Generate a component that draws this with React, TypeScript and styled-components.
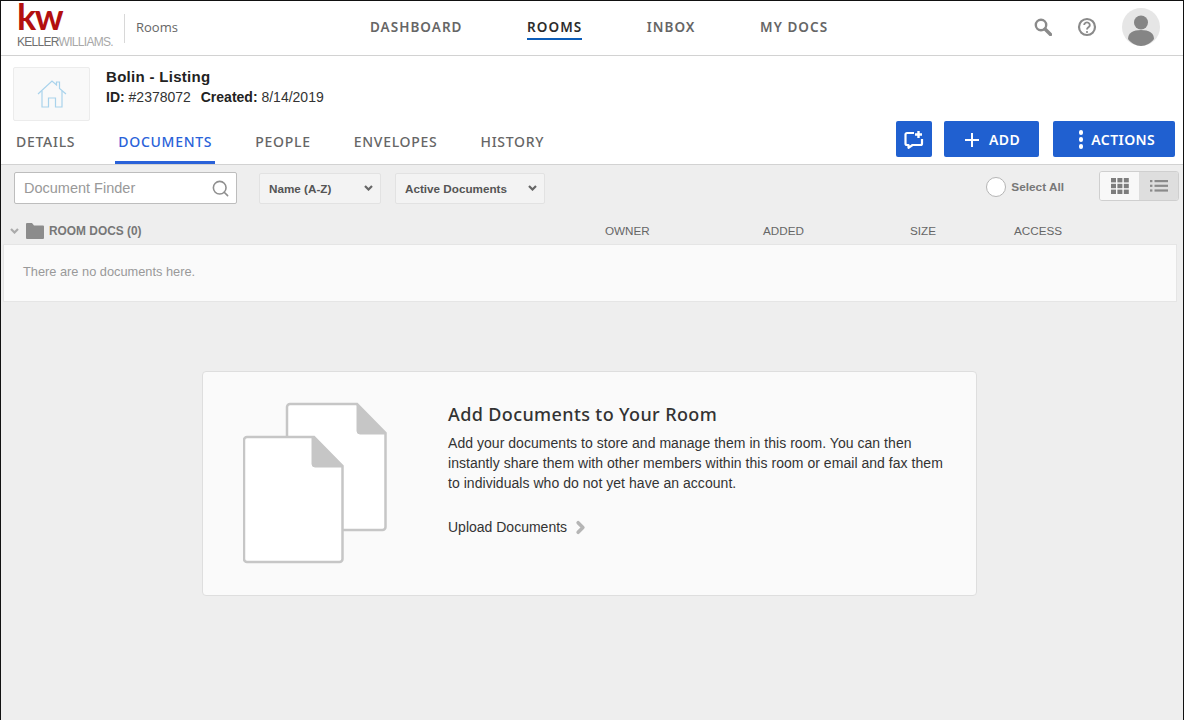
import styled, { createGlobalStyle } from "styled-components";
import { ChevronRight, Search } from "lucide-react";

const GlobalStyle = createGlobalStyle`
  html, body { margin: 0; padding: 0; }
  body { font-family: "Liberation Sans", Arial, sans-serif; }
  * { box-sizing: border-box; }
`;

const navItems = ["DASHBOARD", "ROOMS", "INBOX", "MY DOCS"];
const tabs = ["DETAILS", "DOCUMENTS", "PEOPLE", "ENVELOPES", "HISTORY"];

function DocsIcon() {
  return (
    <svg width="144" height="162" viewBox="0 0 144 162" fill="none">
      <path
        d="M47 2h67l28.500 29v94a3 3 0 0 1-3 3H47a3 3 0 0 1-3-3V5a3 3 0 0 1 3-3z"
        fill="#fff"
        stroke="#c6c6c6"
        strokeWidth="2.500"
      />
      <path d="M114 2l29 30h-26a3 3 0 0 1-3-3z" fill="#c6c6c6" stroke="#c6c6c6" strokeLinejoin="round" />
      <path
        d="M4 35h67l28.500 29v93a3 3 0 0 1-3 3H4a3 3 0 0 1-3-3V38a3 3 0 0 1 3-3z"
        fill="#fff"
        stroke="#c6c6c6"
        strokeWidth="2.500"
      />
      <path d="M69 35l30 30H72a3 3 0 0 1-3-3z" fill="#c6c6c6" stroke="#c6c6c6" strokeLinejoin="round" />
    </svg>
  );
}

function HouseIcon() {
  return (
    <svg width="30" height="30" viewBox="0 0 30 30" fill="none" stroke="#a9d3ec" strokeWidth="1.200">
      <path d="M1 15L15 2l4.500 4V3h3v6.500L29 15" />
      <path d="M5 12v16h6.500v-9h7v9H25V12" />
    </svg>
  );
}

function ChatPlusIcon() {
  return (
    <svg width="20" height="19" viewBox="0 0 20 19" fill="none">
      <path
        d="M10 3H3a1.500 1.500 0 0 0-1.500 1.500v9A1.500 1.500 0 0 0 3 15h1.500v2.800L8.500 15H16.500a1.500 1.500 0 0 0 1.500-1.500V9"
        stroke="#fff"
        strokeWidth="2.200"
        strokeLinejoin="round"
      />
      <path d="M14.500 1v7M11 4.500h7" stroke="#fff" strokeWidth="2.400" />
    </svg>
  );
}

function QuestionIcon() {
  return (
    <svg width="20" height="20" viewBox="0 0 20 20" fill="none">
      <circle cx="10" cy="10" r="8" stroke="#8a8a8a" strokeWidth="2.200" />
      <path
        d="M7.200 8a2.800 2.600 0 1 1 4.300 2.200c-1 .7-1.500 1-1.500 2.300"
        stroke="#8a8a8a"
        strokeWidth="1.900"
      />
      <circle cx="10" cy="15" r="1.100" fill="#8a8a8a" />
    </svg>
  );
}

function TopSearchIcon() {
  return (
    <svg width="18" height="18" viewBox="0 0 18 18" fill="none" stroke="#8a8a8a">
      <circle cx="7" cy="7" r="5.200" strokeWidth="2.400" />
      <path d="M11 11l5.500 5.500" strokeWidth="3.400" strokeLinecap="round" />
    </svg>
  );
}

function AvatarIcon() {
  return (
    <svg width="38" height="38" viewBox="0 0 38 38">
      <circle cx="19" cy="19" r="19" fill="#e6e6e6" />
      <circle cx="19" cy="14.500" r="7" fill="#858585" />
      <path d="M6 31c0-6 5-9 13-9s13 3 13 9c-3 4-8 7-13 7s-10-3-13-7z" fill="#858585" />
    </svg>
  );
}

function GridIcon() {
  return (
    <svg width="18" height="16" viewBox="0 0 18 16" fill="#7d7d7d">
      {[0, 1, 2].flatMap((row) =>
        [0, 1, 2].map((col) => (
          <rect key={`${row}-${col}`} x={col * 6.400} y={row * 5.800} width="5" height="4.400" />
        ))
      )}
    </svg>
  );
}

function ListIcon() {
  return (
    <svg width="18" height="12" viewBox="0 0 18 12" fill="#8a8a8a">
      {[0, 4.700, 9.400].map((y) => (
        <g key={y}>
          <rect x="0" y={y} width="2.400" height="2.200" />
          <rect x="4.500" y={y} width="13.500" height="2.200" />
        </g>
      ))}
    </svg>
  );
}

function FolderIcon() {
  return (
    <svg width="18" height="16" viewBox="0 0 18 16" fill="#8c8c8c">
      <path d="M0 1a1 1 0 0 1 1-1h5l2 2.500h9a1 1 0 0 1 1 1V15a1 1 0 0 1-1 1H1a1 1 0 0 1-1-1z" />
    </svg>
  );
}

function Caret({ color }: { color: string }) {
  return (
    <svg width="9" height="6" viewBox="0 0 9 6" fill="none" stroke={color} strokeWidth="2.200">
      <path d="M1 1l3.500 3.500L8 1" />
    </svg>
  );
}

export default function App() {
  return (
    <Page>
      <GlobalStyle />
      <TopBar>
        <Logo>
          <LogoMark>kw</LogoMark>
          <LogoName>
            <b>KELLER</b>WILLIAMS.
          </LogoName>
        </Logo>
        <LogoDivider />
        <AppName>Rooms</AppName>
        <MainNav>
          {navItems.map((item) => (
            <NavItem key={item} $active={item === "ROOMS"}>
              {item}
            </NavItem>
          ))}
        </MainNav>
        <TopActions>
          <TopSearchIcon />
          <QuestionIcon />
          <AvatarIcon />
        </TopActions>
      </TopBar>

      <RoomHeader>
        <RoomInfo>
          <Thumb>
            <HouseIcon />
          </Thumb>
          <div>
            <RoomTitle>Bolin - Listing</RoomTitle>
            <RoomMeta>
              <b>ID:</b> #2378072 <b>Created:</b> 8/14/2019
            </RoomMeta>
          </div>
        </RoomInfo>
        <TabRow>
          <Tabs>
            {tabs.map((tab) => (
              <Tab key={tab} $active={tab === "DOCUMENTS"}>
                {tab}
              </Tab>
            ))}
          </Tabs>
          <Buttons>
            <PrimaryButton $width={36}>
              <ChatPlusIcon />
            </PrimaryButton>
            <PrimaryButton $width={95} $inset={2}>
              <PlusGlyph />
              ADD
            </PrimaryButton>
            <PrimaryButton $width={122} $inset={6}>
              <Dots>
                <i />
                <i />
                <i />
              </Dots>
              ACTIONS
            </PrimaryButton>
          </Buttons>
        </TabRow>
      </RoomHeader>

      <Content>
        <Toolbar>
          <Finder>
            <FinderInput placeholder="Document Finder" />
            <Search size={19} color="#8f8f8f" strokeWidth={2} />
          </Finder>
          <SelectBox $width={122}>
            Name (A-Z)
            <Caret color="#666" />
          </SelectBox>
          <SelectBox $width={150}>
            Active Documents
            <Caret color="#666" />
          </SelectBox>
          <SelectAll>
            <Radio />
            Select All
          </SelectAll>
          <ViewToggle>
            <ToggleItem $active>
              <GridIcon />
            </ToggleItem>
            <ToggleItem>
              <ListIcon />
            </ToggleItem>
          </ViewToggle>
        </Toolbar>

        <TableHead>
          <FolderCell>
            <Caret color="#aaa" />
            <FolderIcon />
            ROOM DOCS (0)
          </FolderCell>
          <ColumnLabel>OWNER</ColumnLabel>
          <ColumnLabel>ADDED</ColumnLabel>
          <ColumnLabel>SIZE</ColumnLabel>
          <ColumnLabel>ACCESS</ColumnLabel>
        </TableHead>
        <EmptyRow>There are no documents here.</EmptyRow>

        <PromoCard>
          <DocsIcon />
          <PromoText>
            <PromoTitle>Add Documents to Your Room</PromoTitle>
            <PromoBody>
              Add your documents to store and manage them in this room. You can then
              instantly share them with other members within this room or email and fax them
              to individuals who do not yet have an account.
            </PromoBody>
            <UploadLink>
              Upload Documents
              <ChevronRight size={19} strokeWidth={4.500} color="#b5b5b5" />
            </UploadLink>
          </PromoText>
        </PromoCard>
      </Content>
    </Page>
  );
}

const Page = styled.div`
  width: 1184px;
  height: 720px;
  display: flex;
  flex-direction: column;
  overflow: hidden;
  background: #eeeeee;
  border: 1px solid #111;
  border-bottom: none;
`;

const TopBar = styled.header`
  height: 55px;
  flex: none;
  display: flex;
  align-items: center;
  padding-left: 16px;
  background: #fff;
  border-bottom: 1px solid #d2d2d2;
`;

const Logo = styled.div`
  width: 97px;
  align-self: flex-start;
  display: flex;
  flex-direction: column;
`;

const LogoMark = styled.span`
  display: block;
  font-family: "Lato", sans-serif;
  font-size: 36px;
  font-weight: 700;
  line-height: 30px;
  height: 30px;
  letter-spacing: -1.500px;
  color: #b30f0f;
`;

const LogoName = styled.span`
  display: block;
  margin-top: 5px;
  font-size: 12px;
  line-height: 13px;
  letter-spacing: -0.700px;
  white-space: nowrap;
  color: #a8a8a8;
  b {
    font-weight: 400;
    color: #707070;
  }
`;

const LogoDivider = styled.span`
  width: 1px;
  height: 29px;
  margin: 0 0 0 10px;
  background: #d8d8d8;
`;

const AppName = styled.span`
  margin: 0 0 2px 11px;
  font-family: "Open Sans", sans-serif;
  font-size: 13px;
  color: #666;
`;

const MainNav = styled.nav`
  margin: 0 0 1px 192px;
  display: flex;
  gap: 64.500px;
`;

const NavItem = styled.a<{ $active?: boolean }>`
  height: 24px;
  padding-top: 3px;
  font-family: "Noto Sans", sans-serif;
  font-size: 13.500px;
  line-height: 17px;
  font-weight: 600;
  letter-spacing: 1.050px;
  color: ${({ $active }) => ($active ? "#2c2c2c" : "#666")};
  border-bottom: 2px solid ${({ $active }) => ($active ? "#0b5cb8" : "transparent")};
`;

const TopActions = styled.div`
  margin: 0 23px 2px auto;
  display: flex;
  align-items: center;
  gap: 25px;
`;

const RoomHeader = styled.section`
  height: 109px;
  flex: none;
  display: flex;
  flex-direction: column;
  background: #fff;
  border-bottom: 1px solid #d2d2d2;
`;

const RoomInfo = styled.div`
  display: flex;
  gap: 16px;
  padding: 11px 0 0 12px;
`;

const Thumb = styled.div`
  width: 77px;
  height: 54px;
  display: flex;
  align-items: center;
  justify-content: center;
  background: #f9f9f9;
  border: 1px solid #ececec;
  border-radius: 2px;
`;

const RoomTitle = styled.div`
  margin-top: 1px;
  font-size: 15px;
  line-height: 18px;
  font-weight: 700;
  letter-spacing: 0.300px;
  color: #222;
`;

const RoomMeta = styled.div`
  margin-top: 2px;
  font-size: 14px;
  line-height: 18px;
  color: #333;
  b {
    color: #222;
    margin-left: 6px;
  }
  b:first-child {
    margin-left: 0;
  }
`;

const TabRow = styled.div`
  margin-top: auto;
  display: flex;
  align-items: flex-start;
  justify-content: space-between;
  padding: 0 8px 0 12px;
`;

const Tabs = styled.div`
  display: flex;
  gap: 37px;
  padding-top: 10px;
`;

const Tab = styled.a<{ $active?: boolean }>`
  height: 33px;
  padding: 0 3px;
  font-family: "Noto Sans", sans-serif;
  font-size: 14px;
  line-height: 22px;
  font-weight: 500;
  letter-spacing: 0.720px;
  color: ${({ $active }) => ($active ? "#2a62d9" : "#666")};
  border-bottom: 3px solid ${({ $active }) => ($active ? "#2a62d9" : "transparent")};
`;

const Buttons = styled.div`
  display: flex;
  gap: 12px;
  margin-bottom: 7px;
  & > :last-child {
    margin-left: 2px;
  }
`;

const PrimaryButton = styled.button<{ $width: number; $inset?: number }>`
  width: ${({ $width }) => $width}px;
  height: 36px;
  display: flex;
  align-items: center;
  justify-content: center;
  gap: 8px;
  padding: 1px 0 0 ${({ $inset }) => $inset ?? 0}px;
  border: none;
  border-radius: 2px;
  background: #2060d0;
  color: #fff;
  font-family: "Noto Sans", sans-serif;
  font-size: 14px;
  line-height: 18px;
  font-weight: 600;
  letter-spacing: 0.400px;
`;

const PlusGlyph = styled.span`
  position: relative;
  width: 14px;
  height: 14px;
  margin-right: 2px;
  &::before,
  &::after {
    content: "";
    position: absolute;
    background: #fff;
  }
  &::before {
    left: 0;
    right: 0;
    top: 6px;
    height: 2.500px;
  }
  &::after {
    top: 0;
    bottom: 0;
    left: 6px;
    width: 2.500px;
  }
`;

const Dots = styled.span`
  display: flex;
  flex-direction: column;
  gap: 2.500px;
  i {
    width: 4.500px;
    height: 4.500px;
    border-radius: 50%;
    background: #fff;
  }
`;

const Content = styled.main`
  flex: 1;
  display: flex;
  flex-direction: column;
`;

const Toolbar = styled.div`
  height: 46px;
  flex: none;
  display: flex;
  align-items: center;
  padding: 0 4px 0 13px;
`;

const Finder = styled.div`
  width: 223px;
  height: 32px;
  display: flex;
  align-items: center;
  padding: 0 6px 0 9px;
  background: #fff;
  border: 1px solid #bdbdbd;
  border-radius: 2px;
`;

const FinderInput = styled.input`
  flex: 1;
  min-width: 0;
  border: none;
  outline: none;
  padding: 0;
  font-family: "Liberation Sans", sans-serif;
  font-size: 14.500px;
  &::placeholder {
    color: #999;
    opacity: 1;
  }
`;

const SelectBox = styled.div<{ $width: number }>`
  width: ${({ $width }) => $width}px;
  height: 31px;
  margin-left: 22px;
  display: flex;
  align-items: center;
  justify-content: space-between;
  padding: 0 7px 0 9px;
  background: #f3f3f3;
  border: 1px solid #e2e2e2;
  border-radius: 2px;
  font-size: 11.700px;
  font-weight: 700;
  color: #555;

  & + & {
    margin-left: 14px;
  }
`;

const SelectAll = styled.label`
  margin: -2px 0 0 auto;
  display: flex;
  align-items: center;
  gap: 5px;
  font-size: 11.800px;
  font-weight: 700;
  color: #777;
`;

const Radio = styled.span`
  width: 20px;
  height: 20px;
  border-radius: 50%;
  background: #fff;
  border: 1px solid #b5b5b5;
`;

const ViewToggle = styled.div`
  margin: -5px 0 0 35px;
  display: flex;
  border: 1px solid #cfcfcf;
  border-radius: 3px;
  overflow: hidden;
`;

const ToggleItem = styled.div<{ $active?: boolean }>`
  width: 39px;
  height: 28px;
  display: flex;
  align-items: center;
  justify-content: center;
  background: ${({ $active }) => ($active ? "#f8f8f8" : "#dedede")};
`;

const TableHead = styled.div`
  height: 33px;
  flex: none;
  display: grid;
  grid-template-columns: 595px 158px 147px 104px 1fr;
  align-items: center;
  padding: 6px 0 0 9px;
`;

const FolderCell = styled.div`
  display: flex;
  align-items: center;
  gap: 5px;
  font-size: 11.900px;
  font-weight: 700;
  color: #777;

  svg:first-child {
    margin-right: 2px;
  }
`;

const ColumnLabel = styled.div`
  font-size: 11.700px;
  color: #666;
`;

const EmptyRow = styled.div`
  height: 58px;
  flex: none;
  margin: 0 6px 0 2px;
  display: flex;
  align-items: center;
  padding: 0 0 3px 19px;
  background: #fafafa;
  border: 1px solid #e5e5e5;
  font-size: 12.800px;
  color: #999;
`;

const PromoCard = styled.section`
  width: 775px;
  height: 225px;
  margin: 69px 0 0 201px;
  display: flex;
  padding: 30px 0 0 40px;
  gap: 61px;
  background: #fafafa;
  border: 1px solid #dedede;
  border-radius: 4px;
`;

const PromoText = styled.div`
  display: flex;
  flex-direction: column;
  align-items: flex-start;
`;

const PromoTitle = styled.h2`
  margin: 0;
  font-family: "Noto Sans", sans-serif;
  font-size: 18px;
  line-height: 24px;
  font-weight: 500;
  letter-spacing: 0.380px;
  color: #333;
`;

const PromoBody = styled.p`
  width: 505px;
  margin: 7px 0 0;
  font-size: 14px;
  line-height: 20px;
  letter-spacing: 0.040px;
  color: #333;
`;

const UploadLink = styled.a`
  margin-top: 24px;
  display: flex;
  align-items: center;
  gap: 4px;
  font-size: 14px;
  line-height: 20px;
  color: #333;
`;
